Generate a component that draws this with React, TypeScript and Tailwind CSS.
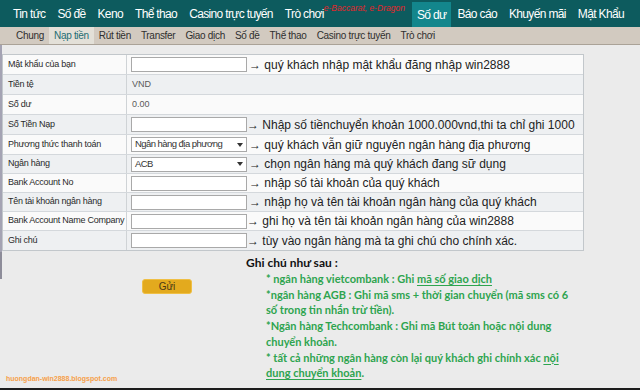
import React from 'react';

type Row = {
    label: string;
    kind: 'input' | 'text' | 'select';
    value?: string;
    note?: string;
    tight?: boolean;
};

const rows: Row[] = [
    { label: 'Mật khẩu của bạn', kind: 'input', note: '→ quý khách nhập mật khẩu đăng nhập win2888' },
    { label: 'Tiền tệ', kind: 'text', value: 'VND' },
    { label: 'Số dư', kind: 'text', value: '0.00' },
    { label: 'Số Tiền Nạp', kind: 'input', note: '→ Nhập số tiềnchuyển khoản 1000.000vnd,thi ta chỉ ghi 1000', tight: true },
    { label: 'Phương thức thanh toán', kind: 'select', value: 'Ngân hàng địa phương', note: '→ quý khách vẫn giữ nguyên ngân hàng địa phương' },
    { label: 'Ngân hàng', kind: 'select', value: 'ACB', note: '→ chọn ngân hàng mà quý khách đang sữ dụng' },
    { label: 'Bank Account No', kind: 'input', note: '→ nhập số tài khoản của quý khách' },
    { label: 'Tên tài khoản ngân hàng', kind: 'input', note: '→ nhập họ và tên tài khoản ngân hàng của quý khách' },
    { label: 'Bank Account Name Company', kind: 'input', note: '→ ghi họ và tên tài khoản ngân hàng của win2888', tight: true },
    { label: 'Ghi chú', kind: 'input', note: '→ tùy vào ngân hàng mà ta ghi chú cho chính xác.', tight: true },
];

const subItems = ['Chung', 'Nạp tiền', 'Rút tiền', 'Transfer', 'Giao dịch', 'Số đề', 'Thể thao', 'Casino trực tuyến', 'Trò chơi'];

const TopNav = () => (
    <nav className="flex h-[27px] items-stretch whitespace-nowrap bg-[#0d5b5e] pl-[7px] text-[12px] tracking-[-0.65px] text-white">
        {['Tin tức', 'Số đề', 'Keno', 'Thể thao', 'Casino trực tuyến'].map((t) => (
            <span key={t} className="flex shrink-0 items-center px-[6px]">
                {t}
            </span>
        ))}
        <span className="flex shrink-0 items-center pl-[6px] pr-[7px]">
            Trò chơi
            <span className="self-start pt-[4px] text-[8.5px] italic leading-none tracking-normal text-[#e3262b]">e-Baccarat, e-Dragon</span>
        </span>
        <span className="mt-[2px] flex shrink-0 items-center bg-[#13868c] px-[5px]">Số dư</span>
        {['Báo cáo', 'Khuyến mãi', 'Mật Khẩu'].map((t) => (
            <span key={t} className="flex shrink-0 items-center px-[6px]">
                {t}
            </span>
        ))}
    </nav>
);

const SubNav = () => (
    <div className="flex h-[18px] items-stretch whitespace-nowrap border-b border-[#aaa297] bg-[#d2cac0] pl-[11px] text-[10px] tracking-[-0.3px] text-[#2f2f2f]">
        {subItems.map((t) => (
            <span
                key={t}
                className={t === 'Nạp tiền' ? 'flex shrink-0 items-center bg-[#e3e0d8] px-[5px] text-[#1d6d72]' : 'flex shrink-0 items-center px-[5px]'}
            >
                {t}
            </span>
        ))}
    </div>
);

const Field = ({ row }: { row: Row }) => {
    if (row.kind === 'text') {
        return <span className="pl-[5px] text-[9px] text-[#5a5a5a]">{row.value}</span>;
    }
    return (
        <div className="flex items-center pl-[4px]">
            {row.kind === 'input' ? (
                <div className="h-[15px] w-[116px] shrink-0 border border-[#a9a9a9] bg-white" />
            ) : (
                <div className="flex h-[15px] w-[116px] shrink-0 items-center justify-between border border-[#a9a9a9] bg-white pl-[3px] pr-[3px]">
                    <span className="text-[9.5px] tracking-[-0.55px] text-[#333]">{row.value}</span>
                    <svg width="6" height="4" viewBox="0 0 6 4">
                        <path d="M0 0h6L3 4z" fill="#333" />
                    </svg>
                </div>
            )}
            {row.note && (
                <span className={`whitespace-nowrap text-[12px] text-[#222] ${row.tight ? 'ml-0' : 'ml-[2px]'}`}>{row.note}</span>
            )}
        </div>
    );
};

const FormTable = () => (
    <div className="mt-[9px] w-[582px] border border-[#c2c7cb]">
        {rows.map((row, i) => (
            <div
                key={row.label}
                className={`flex items-stretch border-b border-[#d4d8dc] last:border-b-0 ${i < 5 ? 'h-[20px]' : 'h-[19px]'} ${
                    i % 2 === 0 ? 'bg-[#fafafa]' : 'bg-[#eef0f2]'
                }`}
            >
                <div className="flex w-[124px] shrink-0 items-center whitespace-nowrap border-r border-[#cfd3d6] pl-[5px] text-[9px] tracking-[-0.25px] text-[#2a2a2a]">
                    {row.label}
                </div>
                <div className="flex min-w-0 items-center">
                    <Field row={row} />
                </div>
            </div>
        ))}
    </div>
);

const Notes = () => (
    <div className="pt-[3px] font-['Lato',sans-serif] font-bold">
        <p className="text-[12px] leading-[16px] text-[#111]">Ghi chú như sau :</p>
        <div className="whitespace-nowrap pl-[20px] text-[11px] leading-[15.7px] text-[#2ea44f] [&_u]:underline-offset-2">
            <p>
                * ngân hàng vietcombank : Ghi <u>mã số giao dịch</u>
            </p>
            <p>*ngân hàng AGB : Ghi mã sms + thời gian chuyển (mã sms có 6</p>
            <p>số trong tin nhắn trừ tiền).</p>
            <p>*Ngân hàng Techcombank : Ghi mã Bút toán hoặc nội dung</p>
            <p>chuyển khoản.</p>
            <p>
                * tất cả những ngân hàng còn lại quý khách ghi chính xác <u>nội </u>
            </p>
            <p>
                <u>dung chuyển khoản</u>.
            </p>
        </div>
    </div>
);

export default function App() {
    return (
        <div className="flex h-[390px] w-[640px] flex-col overflow-hidden border-b-2 border-[#1c1c1c] bg-[#ebebeb] font-['Liberation_Sans',Arial,sans-serif]">
            <TopNav />
            <SubNav />
            <div className="border-l-2 border-[#a4a3b3] pb-[1px]">
                <FormTable />
            </div>
            <div className="flex flex-1">
                <div className="flex w-[246px] shrink-0 flex-col">
                    <div className="h-[27px] border-l-2 border-[#8d8c99]" />
                    <div className="ml-[142px] flex h-[15px] w-[50px] items-center justify-center rounded-[3px] border border-[#efbf45] bg-[#e3aa1e] text-[10px] text-[#4a3916]">
                        Gửi
                    </div>
                    <p className="mt-auto pb-[4px] pl-[6px] text-[7px] font-bold text-[#f6a04a]">huongdan-win2888.blogspot.com</p>
                </div>
                <Notes />
            </div>
        </div>
    );
}
